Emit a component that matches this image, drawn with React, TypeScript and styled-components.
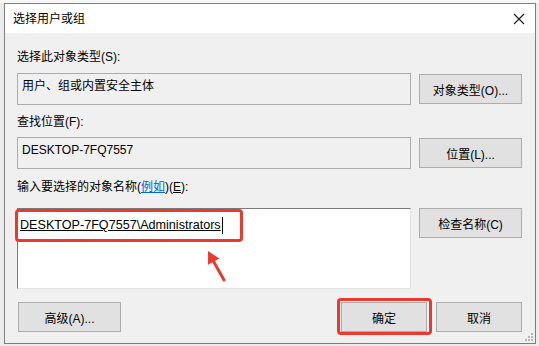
import styled, { createGlobalStyle } from 'styled-components';

const GlobalStyle = createGlobalStyle`
  html, body {
    margin: 0;
    padding: 0;
    background: #ececec;
    width: 539px;
    height: 346px;
    overflow: hidden;
  }
  * {
    box-sizing: border-box;
  }
`;

const font = `"Liberation Sans", "Noto Sans CJK SC", sans-serif`;
const red = '#e83a2e';

const App = () => {
  return (
    <>
      <GlobalStyle />
      <Screen>
        <Dialog>
          <TitleBar>
            <Title>选择用户或组</Title>
            <CloseIcon width='12' height='12' viewBox='0 0 12 12'>
              <path d='M1 1 L11 11 M11 1 L1 11' stroke='#1a1a1a' strokeWidth='1.1' />
            </CloseIcon>
          </TitleBar>
          <Body>
            <Label>选择此对象类型(S):</Label>
            <FieldRow $gap={8}>
              <ReadBox>用户、组或内置安全主体</ReadBox>
              <Button>对象类型(O)...</Button>
            </FieldRow>

            <Label $top={9}>查找位置(F):</Label>
            <FieldRow $gap={7}>
              <ReadBox>DESKTOP-7FQ7557</ReadBox>
              <Button>位置(L)...</Button>
            </FieldRow>

            <Label $top={10}>
              输入要选择的对象名称(<Link>例如</Link>)(<U>E</U>):
            </Label>
            <FieldRow $gap={13} $alignTop>
              <NameArea>
                <Typed>DESKTOP-7FQ7557\Administrators</Typed>
                <Caret />
                <MarkBox />
                <Arrow width='30' height='40' viewBox='0 0 30 40'>
                  <path d='M23 34 L12.6 15.6' stroke={red} strokeWidth='3' strokeLinecap='round' />
                  <polygon points='7,5 18.4,12.6 7.1,18.8' fill={red} />
                </Arrow>
              </NameArea>
              <Button>检查名称(C)</Button>
            </FieldRow>

            <Footer>
              <Button $width={103}>高级(A)...</Button>
              <FooterRight>
                <Button $width={86} $marked>
                  确定
                </Button>
                <Button $width={86}>取消</Button>
              </FooterRight>
            </Footer>
          </Body>
          <Grip width='10' height='10' viewBox='0 0 10 10'>
            <rect x='7' y='1' width='2' height='2' fill='#b5b5b5' />
            <rect x='4' y='4' width='2' height='2' fill='#b5b5b5' />
            <rect x='7' y='4' width='2' height='2' fill='#b5b5b5' />
            <rect x='1' y='7' width='2' height='2' fill='#b5b5b5' />
            <rect x='4' y='7' width='2' height='2' fill='#b5b5b5' />
            <rect x='7' y='7' width='2' height='2' fill='#b5b5b5' />
          </Grip>
        </Dialog>
      </Screen>
    </>
  );
};

export default App;

const Screen = styled.div`
  width: 539px;
  height: 346px;
  padding: 3px 0 0 4px;
  background: linear-gradient(180deg, #f7f7f7 0px, #f7f7f7 3px, #ececec 3px);
  font-family: ${font};
  font-size: 12px;
  color: #000;
`;

const Dialog = styled.div`
  position: relative;
  width: 532px;
  height: 341px;
  border: 1px solid #7e7e7e;
  background: #f0f0f0;
  display: flex;
  flex-direction: column;
`;

const TitleBar = styled.div`
  height: 29px;
  background: #fff;
  display: flex;
  align-items: center;
  justify-content: space-between;
  padding: 0 10px 0 8px;
`;

const Title = styled.div`
  font-size: 12px;
  line-height: 16px;
  color: #000;
`;

const CloseIcon = styled.svg`
  display: block;
  margin-right: 0;
`;

const Body = styled.div`
  display: flex;
  flex-direction: column;
  padding: 16px 13px 0 12px;
`;

const Label = styled.div<{ $top?: number }>`
  height: 16px;
  line-height: 16px;
  margin-top: ${(p) => p.$top ?? 0}px;
  white-space: nowrap;
`;

const Link = styled.span`
  color: #0066cc;
  text-decoration: underline;
`;

const U = styled.span`
  text-decoration: underline;
`;

const FieldRow = styled.div<{ $gap: number; $alignTop?: boolean }>`
  margin-top: ${(p) => p.$gap}px;
  display: grid;
  grid-template-columns: 394px 103px;
  column-gap: 8px;
  align-items: ${(p) => (p.$alignTop ? 'start' : 'center')};
`;

const ReadBox = styled.div`
  height: 32px;
  border: 1px solid #adadad;
  background: #f0f0f0;
  padding: 4px 4px 0;
  line-height: 16px;
`;

const NameArea = styled.div`
  position: relative;
  height: 81px;
  background: #fff;
  border-style: solid;
  border-width: 1px;
  border-color: #7a7a7a #e3e3e3 #e3e3e3 #7a7a7a;
  padding: 8px 2px 0;
  line-height: 16px;
  display: flex;
  align-items: flex-start;
`;

const Typed = styled.span`
  font-size: 12.6px;
  text-decoration: underline;
  white-space: nowrap;
`;

const Caret = styled.span`
  display: inline-block;
  width: 1px;
  height: 17px;
  margin-left: 1px;
  background: #000;
`;

const MarkBox = styled.div`
  position: absolute;
  left: -3px;
  top: 0px;
  width: 228px;
  height: 33px;
  border: 3px solid ${red};
  border-radius: 4px;
`;

const Arrow = styled.svg`
  position: absolute;
  left: 183px;
  top: 37px;
`;

const Button = styled.div<{ $width?: number; $marked?: boolean }>`
  position: relative;
  height: 30px;
  width: ${(p) => (p.$width ? `${p.$width}px` : 'auto')};
  border: 1px solid #adadad;
  background: #e1e1e1;
  display: flex;
  align-items: center;
  justify-content: center;
  white-space: nowrap;
  font-size: 12px;

  &::after {
    content: '';
    display: ${(p) => (p.$marked ? 'block' : 'none')};
    position: absolute;
    left: -5px;
    top: -5px;
    right: -6px;
    bottom: -4px;
    border: 3px solid ${red};
    border-radius: 4px;
  }
`;

const Footer = styled.div`
  margin-top: 13px;
  display: flex;
  justify-content: space-between;
  padding-left: 1px;
`;

const FooterRight = styled.div`
  display: flex;
  gap: 9px;
`;

const Grip = styled.svg`
  position: absolute;
  right: 1px;
  bottom: 1px;
`;
